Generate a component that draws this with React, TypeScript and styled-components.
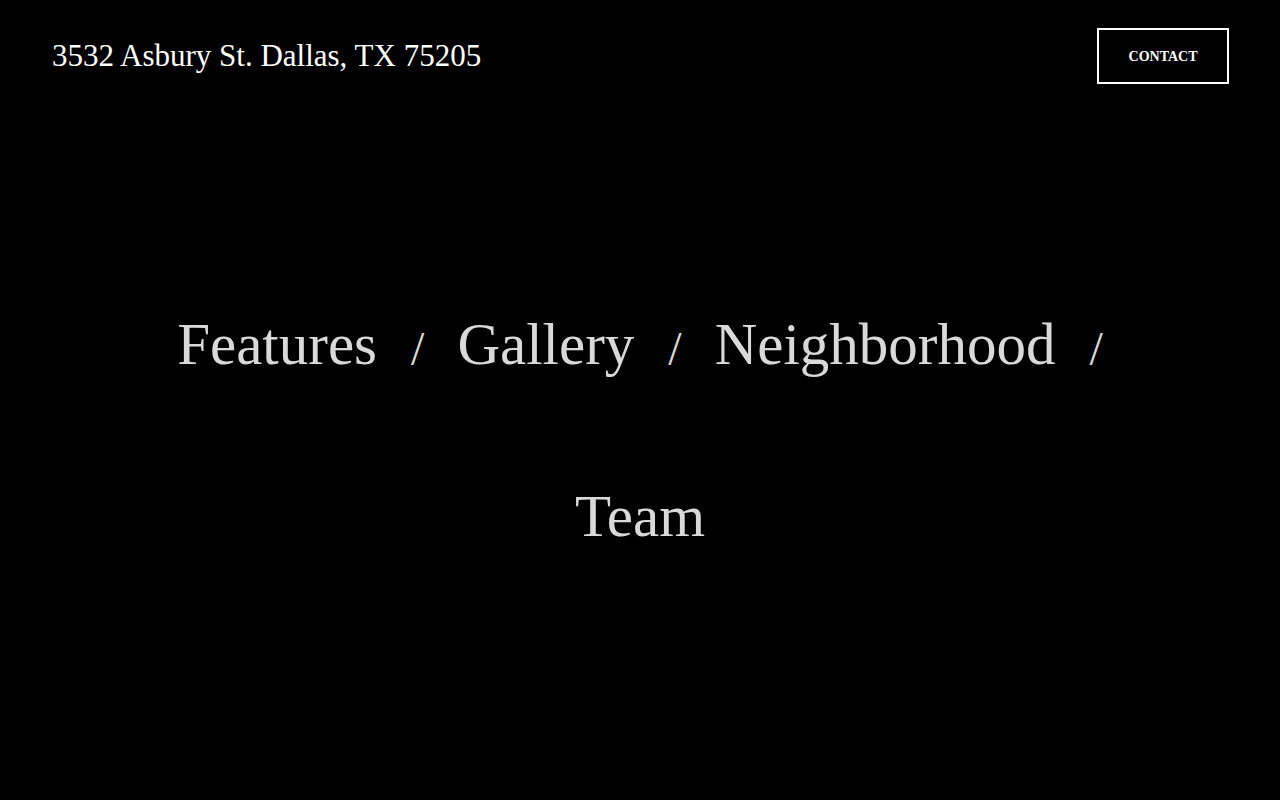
import React from 'react';
import styled, { createGlobalStyle } from 'styled-components';

const GlobalStyle = createGlobalStyle`
  html, body {
    margin: 0;
    padding: 0;
    background: #000;
  }
  body {
    font-family: "Liberation Serif", "Times New Roman", serif;
    color: #fff;
  }
`;

const Spage = styled.div`
  min-height: 800px;
  background: #000;
  display: flex;
  flex-direction: column;
`;

const Sheader = styled.header`
  display: flex;
  justify-content: space-between;
  align-items: center;
  padding: 28px 51px 0 52px;
`;

const Saddress = styled.div`
  font-size: 31px;
  color: #fff;
`;

const ScontactButton = styled.a`
  display: flex;
  align-items: center;
  justify-content: center;
  box-sizing: border-box;
  width: 132px;
  height: 56px;
  padding-top: 1px;
  border: 2px solid #fff;
  color: #fff;
  font-size: 14px;
  font-weight: bold;
  text-transform: uppercase;
  text-decoration: none;
  cursor: pointer;
`;

const Snav = styled.nav`
  display: flex;
  flex-wrap: wrap;
  justify-content: center;
  align-items: baseline;
  max-width: 1000px;
  margin: 0 auto;
  padding-top: 226px;
  row-gap: 104px;
  column-gap: 33px;
`;

const SnavItem = styled.div`
  display: flex;
  align-items: baseline;
`;

const SnavLink = styled.a`
  font-size: 59px;
  line-height: 68px;
  color: #d9d9d9;
  text-decoration: none;
  cursor: pointer;
`;

const Sslash = styled.span`
  font-size: 48px;
  color: #d9d9d9;
  margin-left: 34px;
  position: relative;
  top: 1px;
`;

const links = ['Features', 'Gallery', 'Neighborhood', 'Team'];

function App() {
  return (
    <>
      <GlobalStyle />
      <Spage>
        <Sheader>
          <Saddress>3532 Asbury St. Dallas, TX 75205</Saddress>
          <ScontactButton>Contact</ScontactButton>
        </Sheader>
        <Snav>
          {links.map((link, index) => (
            <SnavItem key={link}>
              <SnavLink>{link}</SnavLink>
              {index < links.length - 1 && <Sslash>/</Sslash>}
            </SnavItem>
          ))}
        </Snav>
      </Spage>
    </>
  );
}

export default App;
